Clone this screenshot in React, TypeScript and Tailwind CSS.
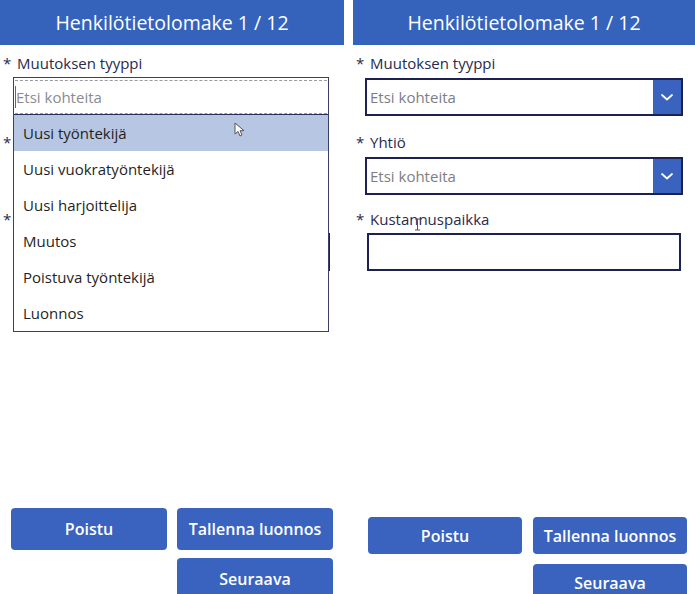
import type { ReactNode } from "react";

const font = { fontFamily: '"Open Sans", "Noto Sans", sans-serif' };

const options = [
  "Uusi työntekijä",
  "Uusi vuokratyöntekijä",
  "Uusi harjoittelija",
  "Muutos",
  "Poistuva työntekijä",
  "Luonnos",
];

// covered: the open list sits on top, so only the asterisks peek out
function Label({ children, className = "", covered }: { children: ReactNode; className?: string; covered?: boolean }) {
  return (
    <div className={`flex h-[20px] items-center text-[15px] text-[#272b4d] ${className}`}>
      <span className="w-[17px] pl-[3px] text-[15px]">*</span>
      <span className={covered ? "invisible" : ""}>{children}</span>
    </div>
  );
}

function Chevron() {
  return (
    <svg width="14" height="9" viewBox="0 0 14 9" fill="none">
      <path d="M2 2l5 4.5L12 2" stroke="white" strokeWidth="1.8" strokeLinecap="round" strokeLinejoin="round" />
    </svg>
  );
}

function Combo({ inset, covered }: { inset: string; covered?: boolean }) {
  return (
    <div className={`mt-[5px] flex h-[38px] border-2 border-[#1d2152] bg-white ${inset}`}>
      <div className={`flex flex-1 items-center pl-[3px] text-[15px] text-[#7d7d85] ${covered ? "invisible" : ""}`}>
        Etsi kohteita
      </div>
      <div className="flex w-[28px] items-center justify-center bg-[#3a62bf]">
        <Chevron />
      </div>
    </div>
  );
}

function Fields({ comboInset, covered }: { comboInset: string; covered?: boolean }) {
  return (
    <div className="flex flex-col">
      <Label className="mt-[8px]">Muutoksen tyyppi</Label>
      <Combo inset={comboInset} covered={covered} />
      <Label className="mt-[16px]" covered={covered}>Yhtiö</Label>
      <Combo inset={comboInset} covered={covered} />
      <Label className="mt-[14px]" covered={covered}>Kustannuspaikka</Label>
      <div className="mx-[14px] mt-[4px] h-[38px] border-2 border-[#1d2152] bg-white" />
    </div>
  );
}

function Header() {
  return (
    <div className="flex h-[45px] items-center justify-center bg-[#3563bb] text-[19.5px] text-white">
      Henkilötietolomake 1 / 12
    </div>
  );
}

function Btn({ children, size }: { children: ReactNode; size: string }) {
  return (
    <button
      className={`flex items-center justify-center rounded-[4px] bg-[#3a63c0] text-[16px] font-semibold text-white ${size}`}
    >
      {children}
    </button>
  );
}

function Buttons({ className, size }: { className: string; size: string }) {
  return (
    <div className={`grid w-max grid-cols-2 ${className}`}>
      <Btn size={size}>Poistu</Btn>
      <Btn size={size}>Tallenna luonnos</Btn>
      <div />
      <Btn size={size}>Seuraava</Btn>
    </div>
  );
}

function Pointer() {
  return (
    <svg width="11" height="15" viewBox="0 0 11 15">
      <path d="M1 1v11l3-2.5 2 4.5 2-1-2-4.3h4z" fill="white" stroke="#555" strokeWidth="1" strokeLinejoin="round" />
    </svg>
  );
}

function TextCursor() {
  return (
    <svg width="7" height="13" viewBox="0 0 7 13" fill="none">
      <path d="M1 1h2.5M3.5 1h2.5M3.5 1v11M1 12h2.5M3.5 12h2.5" stroke="#555" strokeWidth="1" />
    </svg>
  );
}

function OpenList() {
  return (
    <div className="absolute left-[13px] top-[77px] w-[316px] border border-[#3b3f68] bg-white">
      <div className="mx-[1px] mt-[2px] flex h-[34px] items-center border-y border-dashed border-[#9a9aa0] text-[15px] text-[#8a8a90]">
        <span className="h-[22px] w-[1px] bg-[#666]" />
        <span>Etsi kohteita</span>
      </div>
      <div className="h-[1px] bg-[#2a2e58]" />
      {options.map((o, i) => (
        <div
          key={o}
          className={`flex h-[36px] items-center pl-[9px] text-[15px] text-[#1f1f24] ${i === 0 ? "bg-[#b7c7e3]" : ""}`}
        >
          {o}
        </div>
      ))}
      <div className="absolute left-[220px] top-[44px]">
        <Pointer />
      </div>
    </div>
  );
}

export default function App() {
  return (
    <div className="flex h-[594px] w-[695px] overflow-hidden bg-white" style={font}>
      <section className="relative flex w-[344px] flex-col">
        <Header />
        <Fields comboInset="ml-[14px] mr-[16px]" covered />
        <OpenList />
        <Buttons
          className="mt-auto mb-[-6px] ml-[11px] gap-x-[10px] gap-y-[8px]"
          size="h-[42px] w-[156px]"
        />
      </section>
      <div className="w-[9px]" />
      <section className="relative flex w-[342px] flex-col">
        <Header />
        <Fields comboInset="mx-[12px]" />
        <div className="absolute left-[61px] top-[218px]">
          <TextCursor />
        </div>
        <Buttons
          className="mt-auto mb-[-7px] ml-[15px] gap-x-[11px] gap-y-[10px]"
          size="h-[37px] w-[154px]"
        />
      </section>
    </div>
  );
}
